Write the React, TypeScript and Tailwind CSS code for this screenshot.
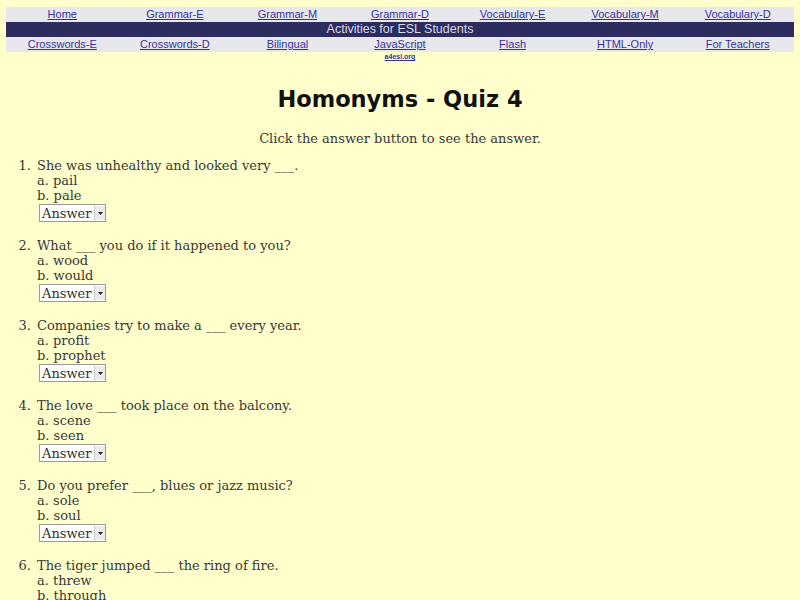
const topLinks = ["Home", "Grammar-E", "Grammar-M", "Grammar-D", "Vocabulary-E", "Vocabulary-M", "Vocabulary-D"];
const bottomLinks = ["Crosswords-E", "Crosswords-D", "Bilingual", "JavaScript", "Flash", "HTML-Only", "For Teachers"];

const questions = [
  { q: "She was unhealthy and looked very ___.", a: "pail", b: "pale" },
  { q: "What ___ you do if it happened to you?", a: "wood", b: "would" },
  { q: "Companies try to make a ___ every year.", a: "profit", b: "prophet" },
  { q: "The love ___ took place on the balcony.", a: "scene", b: "seen" },
  { q: "Do you prefer ___, blues or jazz music?", a: "sole", b: "soul" },
  { q: "The tiger jumped ___ the ring of fire.", a: "threw", b: "through" },
];

const AnswerBox = () => (
  <div className="ml-[2px] mt-[1px] inline-flex h-[18px] items-center border border-[#9a9a9a] bg-white pl-[2px] text-[13px] leading-none text-[#333]">
    <span>Answer</span>
    <span className="ml-[3px] flex h-[14px] w-[11px] items-center justify-center border-l border-[#ccc] bg-[#ececec]">
      <svg width="5" height="3" viewBox="0 0 5 3">
        <path d="M0 0h5L2.5 3z" fill="#222" />
      </svg>
    </span>
  </div>
);

export default function App() {
  return (
    <div className="min-h-screen bg-[#ffffcc] pt-[7px] font-['DejaVu_Serif',serif] text-[#383838]">
      <div className="mx-[6px] font-['Liberation_Sans',Arial,sans-serif] text-[11px]">
        <div className="grid h-[15px] grid-cols-7 items-center bg-[#e8e8ec]">
          {topLinks.map((l) => (
            <a key={l} href="#" className="text-center leading-none text-[#333399] underline">
              {l}
            </a>
          ))}
        </div>
        <div className="flex h-[15px] items-center justify-center bg-[#2c2c5e] text-[12.5px] text-[#d8d8e6]">
          Activities for ESL Students
        </div>
        <div className="grid h-[15px] grid-cols-7 items-center bg-[#e8e8ec]">
          {bottomLinks.map((l) => (
            <a key={l} href="#" className="text-center leading-none text-[#333399] underline">
              {l}
            </a>
          ))}
        </div>
        <div className="grid grid-cols-7">
          <span />
          <span />
          <span />
          <a href="#" className="text-center text-[7px] font-bold leading-[10px] text-[#333399] underline">
            a4esl.org
          </a>
        </div>
      </div>

      <h1 className="mt-[22px] text-center font-['DejaVu_Sans',sans-serif] text-[22.5px] font-bold leading-[30px] text-[#111]">
        Homonyms - Quiz 4
      </h1>

      <p className="mt-[17px] text-center text-[13px] leading-[15px]">Click the answer button to see the answer.</p>

      <ol className="mt-[12px]">
        {questions.map((item, i) => (
          <li key={i} className="mb-[15px] flex text-[13px] leading-[15px]">
            <span className="w-[37px] shrink-0 pr-[6px] text-right">{i + 1}.</span>
            <div className="flex flex-col">
              <span>{item.q}</span>
              <span>a. {item.a}</span>
              <span>b. {item.b}</span>
              <div className="h-[20px]">
                <AnswerBox />
              </div>
            </div>
          </li>
        ))}
      </ol>
    </div>
  );
}
